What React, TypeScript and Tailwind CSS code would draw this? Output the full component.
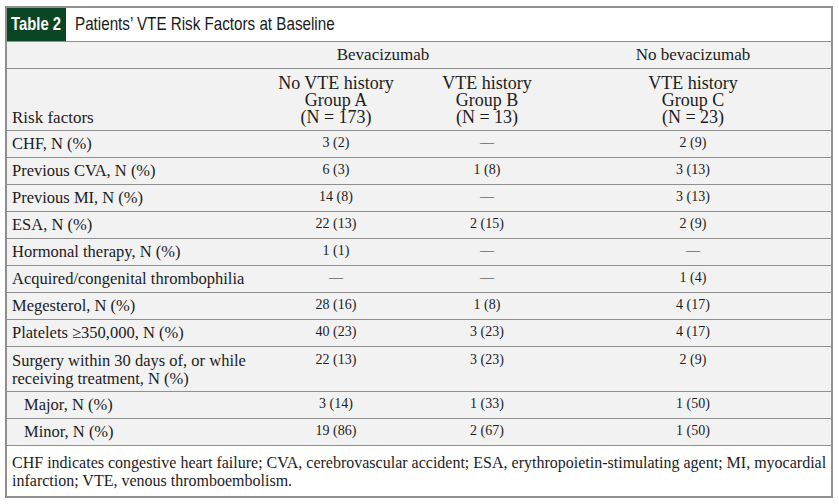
import * as React from "react";

const rows: { label: React.ReactNode; key: string; a: string; b: string; c: string; indent?: boolean; tall?: boolean }[] = [
  { key: "chf", label: "CHF, N (%)", a: "3 (2)", b: "—", c: "2 (9)" },
  { key: "cva", label: "Previous CVA, N (%)", a: "6 (3)", b: "1 (8)", c: "3 (13)" },
  { key: "mi", label: "Previous MI, N (%)", a: "14 (8)", b: "—", c: "3 (13)" },
  { key: "esa", label: "ESA, N (%)", a: "22 (13)", b: "2 (15)", c: "2 (9)" },
  { key: "horm", label: "Hormonal therapy, N (%)", a: "1 (1)", b: "—", c: "—" },
  { key: "acq", label: "Acquired/congenital thrombophilia", a: "—", b: "—", c: "1 (4)" },
  { key: "meg", label: "Megesterol, N (%)", a: "28 (16)", b: "1 (8)", c: "4 (17)" },
  { key: "plt", label: "Platelets ≥350,000, N (%)", a: "40 (23)", b: "3 (23)", c: "4 (17)" },
  {
    key: "surg",
    label: (
      <>
        Surgery within 30 days of, or while
        <br />
        receiving treatment, N (%)
      </>
    ),
    a: "22 (13)",
    b: "3 (23)",
    c: "2 (9)",
    tall: true,
  },
  { key: "major", label: "Major, N (%)", a: "3 (14)", b: "1 (33)", c: "1 (50)", indent: true },
  { key: "minor", label: "Minor, N (%)", a: "19 (86)", b: "2 (67)", c: "1 (50)", indent: true },
];

const grid = "grid grid-cols-[246px_166px_136px_1fr]";
const serif = "font-['Liberation_Serif',serif]";
const sans = "font-['Liberation_Sans',Arial,sans-serif]";

export default function App() {
  return (
    <div className="min-h-[504px] w-[839px] bg-white pl-[5px] pt-[6px]">
      <div className={`flex h-[492px] w-[828px] flex-col border-2 border-[#8f8f8f] text-[#1c1c1c] ${serif}`}>
        <div className="flex h-[33px] items-center bg-white">
          <div className={`flex h-full w-[59px] items-center justify-center bg-[#0a4524] text-white ${sans}`}>
            <span className="inline-block scale-x-[0.78] whitespace-nowrap text-[19px] font-bold">Table 2</span>
          </div>
          <div className={`pl-[9px] text-[#1a1a1a] ${sans}`}>
            <span className="inline-block origin-left scale-x-[0.8] whitespace-nowrap text-[19px]">
              Patients’ VTE Risk Factors at Baseline
            </span>
          </div>
        </div>

        <div className="bg-[#f2f2f2]">
          <div className={`${grid} h-[27px] items-center border-t border-[#8f8f8f] text-[17px]`}>
            <div />
            <div className="col-span-2 pr-[42px] text-center">Bevacizumab</div>
            <div className="text-center">No bevacizumab</div>
          </div>

          <div className={`${grid} h-[62px] items-end border-t border-[#8f8f8f] pb-[4px] text-[18px] leading-[17px]`}>
            <div className="pl-[5px] text-[17px]">Risk factors</div>
            <div className="text-center">
              No VTE history
              <br />
              Group A
              <br />
              (N = 173)
            </div>
            <div className="text-center">
              VTE history
              <br />
              Group B
              <br />
              (N = 13)
            </div>
            <div className="text-center">
              VTE history
              <br />
              Group C
              <br />
              (N = 23)
            </div>
          </div>

          {rows.map((row) => (
            <div
              key={row.key}
              className={`${grid} border-t border-[#8f8f8f] ${row.tall ? "h-[45px] items-start pt-[5px]" : "h-[27px] items-center"}`}
            >
              <div className={`whitespace-nowrap text-[16.5px] leading-[18px] ${row.indent ? "pl-[17px]" : "pl-[5px]"}`}>
                {row.label}
              </div>
              <div className="mb-[3px] text-center text-[14px] leading-[16px]">{row.a}</div>
              <div className="mb-[3px] text-center text-[14px] leading-[16px]">{row.b}</div>
              <div className="mb-[3px] text-center text-[14px] leading-[16px]">{row.c}</div>
            </div>
          ))}
        </div>

        <div className="flex-1 border-t border-[#8f8f8f] bg-white pl-[5px] pt-[8px] text-[16px] leading-[18px]">
          CHF indicates congestive heart failure; CVA, cerebrovascular accident; ESA, erythropoietin-stimulating agent; MI, myocardial
          infarction; VTE, venous thromboembolism.
        </div>
      </div>
    </div>
  );
}
